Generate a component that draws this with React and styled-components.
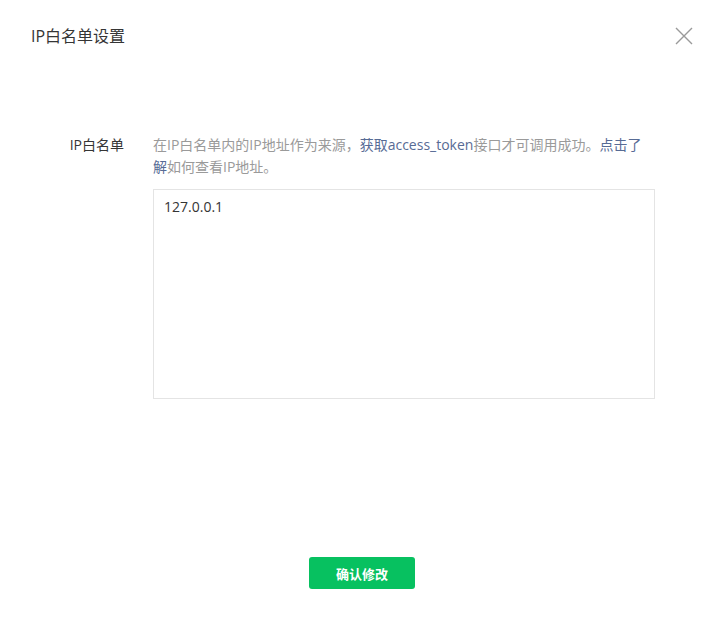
import styled, { createGlobalStyle } from "styled-components";

const FONT = `"Open Sans", "Noto Sans CJK SC", sans-serif`;

const GlobalStyle = createGlobalStyle`
  body {
    margin: 0;
    background: #fff;
    font-family: ${FONT};
  }
`;

export default function App() {
  return (
    <Dialog>
      <GlobalStyle />
      <Header>
        <Title>IP白名单设置</Title>
        <Close aria-label="关闭">
          <svg width="18" height="18" viewBox="0 0 18 18">
            <path d="M1 1 L17 17 M17 1 L1 17" stroke="#9a9a9a" strokeWidth="1.4" fill="none" />
          </svg>
        </Close>
      </Header>
      <Body>
        <Row>
          <Label>IP白名单</Label>
          <Field>
            <Desc>
              在IP白名单内的IP地址作为来源，<Link>获取access_token</Link>接口才可调用成功。<Link>点击了解</Link>如何查看IP地址。
            </Desc>
            <Area defaultValue="127.0.0.1" />
          </Field>
        </Row>
      </Body>
      <Footer>
        <Button>确认修改</Button>
      </Footer>
    </Dialog>
  );
}

const Dialog = styled.div`
  width: 719px;
  height: 618px;
  display: flex;
  flex-direction: column;
`;

const Header = styled.div`
  display: flex;
  justify-content: space-between;
  align-items: center;
  padding: 25px 26px 0 31px;
`;

const Title = styled.h3`
  margin: 0;
  font-size: 16px;
  font-weight: 400;
  line-height: 22px;
  color: #353535;
`;

const Close = styled.div`
  width: 18px;
  height: 18px;
  display: flex;
  margin-top: -1px;
  cursor: pointer;
`;

const Body = styled.div`
  padding-top: 87px;
`;

const Row = styled.div`
  display: flex;
`;

const Label = styled.div`
  width: 124px;
  margin-right: 29px;
  text-align: right;
  font-size: 14px;
  line-height: 22px;
  color: #353535;
`;

const Field = styled.div`
  width: 502px;
`;

const Desc = styled.p`
  margin: 0;
  font-size: 14px;
  line-height: 22px;
  color: #9a9a9a;
`;

const Link = styled.a`
  color: #576b95;
  cursor: pointer;
`;

const Area = styled.textarea`
  display: block;
  margin-top: 11px;
  width: 502px;
  height: 210px;
  box-sizing: border-box;
  border: 1px solid #e4e4e4;
  padding: 7px 10px;
  font-family: ${FONT};
  font-size: 14px;
  line-height: 20px;
  color: #353535;
  resize: none;
  outline: none;
`;

const Footer = styled.div`
  display: flex;
  justify-content: center;
  padding-left: 5px;
  margin-top: 158px;
`;

const Button = styled.button`
  width: 106px;
  height: 32px;
  border: none;
  border-radius: 3px;
  background: #07c160;
  color: #fff;
  font-family: ${FONT};
  font-size: 13px;
  font-weight: 700;
  cursor: pointer;
`;
